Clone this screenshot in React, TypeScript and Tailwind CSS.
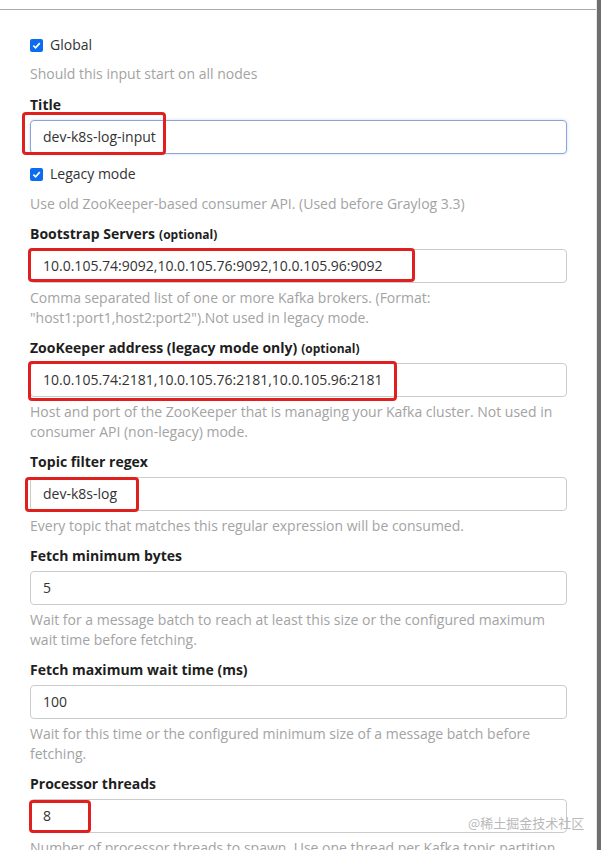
type Field = {
  label: string;
  optional?: boolean;
  value: string;
  help?: string[];
  focused?: boolean;
  mark?: string;
};

const fields: Field[] = [
  {
    label: "Bootstrap Servers",
    optional: true,
    value: "10.0.105.74:9092,10.0.105.76:9092,10.0.105.96:9092",
    help: [
      "Comma separated list of one or more Kafka brokers. (Format:",
      "\"host1:port1,host2:port2\").Not used in legacy mode.",
    ],
    mark: "left-[-2px] top-[-1px] w-[387px] h-[34px]",
  },
  {
    label: "ZooKeeper address (legacy mode only)",
    optional: true,
    value: "10.0.105.74:2181,10.0.105.76:2181,10.0.105.96:2181",
    help: [
      "Host and port of the ZooKeeper that is managing your Kafka cluster. Not used in",
      "consumer API (non-legacy) mode.",
    ],
    mark: "left-[-2px] top-[-2px] w-[369px] h-[40px]",
  },
  {
    label: "Topic filter regex",
    value: "dev-k8s-log",
    help: ["Every topic that matches this regular expression will be consumed."],
    mark: "left-[-5px] top-[0px] w-[114px] h-[35px]",
  },
  {
    label: "Fetch minimum bytes",
    value: "5",
    help: [
      "Wait for a message batch to reach at least this size or the configured maximum",
      "wait time before fetching.",
    ],
  },
  {
    label: "Fetch maximum wait time (ms)",
    value: "100",
    help: [
      "Wait for this time or the configured minimum size of a message batch before",
      "fetching.",
    ],
  },
  {
    label: "Processor threads",
    value: "8",
    help: ["Number of processor threads to spawn. Use one thread per Kafka topic partition."],
    mark: "left-[-1px] top-[1px] w-[62px] h-[33px]",
  },
];

function Check({ label }: { label: string }) {
  return (
    <div className="flex items-center h-[22px]">
      <span className="w-[13px] h-[13px] rounded-[2px] bg-[#0b6cf0] flex items-center justify-center">
        <svg width="9" height="9" viewBox="0 0 10 10">
          <path d="M1.5 5.2 L4 7.6 L8.6 2.4" fill="none" stroke="white" strokeWidth="1.9" />
        </svg>
      </span>
      <span className="ml-[7px] text-[#333]">{label}</span>
    </div>
  );
}

function Help({ lines }: { lines: string[] }) {
  return (
    <div className="text-[#a3a3a3] leading-[20px] whitespace-nowrap">
      {lines.map((l) => (
        <div key={l}>{l}</div>
      ))}
    </div>
  );
}

function Input({ value, focused, mark }: { value: string; focused?: boolean; mark?: string }) {
  return (
    <div className="relative">
      <div
        className={`h-[34px] rounded-[4px] border px-[12px] flex items-center text-[#333] ${
          focused ? "border-[#8ba3d6] shadow-[0_0_3px_rgba(102,140,220,0.35)]" : "border-[#cccccc]"
        }`}
      >
        {value}
      </div>
      {mark && <div className={`absolute ${mark} border-[3px] border-[#e0201e] rounded-[4px]`} />}
    </div>
  );
}

export default function App() {
  return (
    <div
      className="relative w-[601px] h-[850px] overflow-hidden bg-white text-[14px] leading-[20px]"
      style={{ fontFamily: '"Open Sans", "Noto Sans", sans-serif' }}
    >
      <div className="flex h-full">
        <div className="flex-1 pt-[9px] border-r border-[#e8e8e8]">
          <div className="border-t border-[#a9a9a9]" />
          <div className="pl-[30px] pr-[29px] pt-[24px]">
            <Check label="Global" />
            <div className="mt-[8px] mb-[11px]">
              <Help lines={["Should this input start on all nodes"]} />
            </div>

            <div className="mb-[9px]">
              <div className="font-bold text-[#1e1e1e] mb-[5px] h-[20px]">Title</div>
              <Input
                value="dev-k8s-log-input"
                focused
                mark="left-[-8px] top-[-8px] w-[144px] h-[43px]"
              />
            </div>

            <Check label="Legacy mode" />
            <div className="mt-[9px] mb-[10px]">
              <Help lines={["Use old ZooKeeper-based consumer API. (Used before Graylog 3.3)"]} />
            </div>

            {fields.map((f) => (
              <div key={f.label} className="mb-[10px]">
                <div className="font-bold text-[#1e1e1e] mb-[5px] h-[20px] leading-[20px]">
                  {f.label}
                  {f.optional && (
                    <span className="text-[12px] leading-none ml-[4px] align-baseline">(optional)</span>
                  )}
                </div>
                <Input value={f.value} focused={f.focused} mark={f.mark} />
                {f.help && (
                  <div className="mt-[5px]">
                    <Help lines={f.help} />
                  </div>
                )}
              </div>
            ))}
          </div>
        </div>
        <div className="w-[4px] bg-[#6e6e6e]" />
      </div>
      <div
        className="absolute left-[468px] top-[813px] text-[13px] text-[#b9b9b9]"
        style={{ fontFamily: '"Noto Sans CJK SC", "Noto Sans", sans-serif' }}
      >
        @稀土掘金技术社区
      </div>
    </div>
  );
}
